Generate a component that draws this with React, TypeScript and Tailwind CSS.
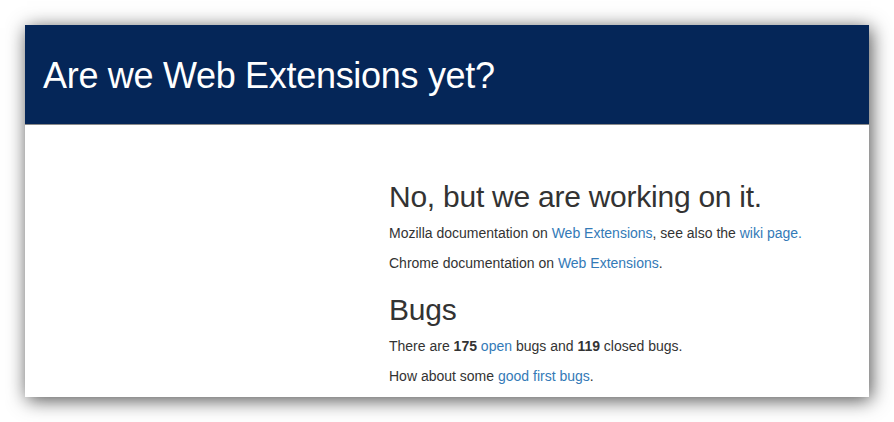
import React from 'react'

const Link = ({ children }: { children: React.ReactNode }) => (
    <a href="#" className="text-[#337ab7] no-underline">{children}</a>
)

export const App = () => {
    return (
        <div className="w-[894px] h-[422px] bg-white overflow-hidden pt-[25px] pl-[25px] font-['Liberation_Sans',Arial,sans-serif]">
            <div className="w-[844px] h-[372px] bg-white overflow-hidden shadow-[2px_3px_18px_rgba(0,0,0,0.7)]">
                <div className="h-[100px] bg-[#052658] border-b border-[#8a8a8a] pt-[31px] pl-[18px]">
                    <h1 className="text-white text-[36px] leading-[40px] font-normal tracking-[-0.3px]">Are we Web Extensions yet?</h1>
                </div>
                <div className="pl-[364px] pt-[55px] text-[#333] text-[14px] leading-[20px]">
                    <h2 className="text-[30px] leading-[33px] font-normal mb-[10px] tracking-[-0.25px]">No, but we are working on it.</h2>
                    <p className="mb-[10px]">Mozilla documentation on <Link>Web Extensions</Link>, see also the <Link>wiki page.</Link></p>
                    <p className="mb-[10px]">Chrome documentation on <Link>Web Extensions</Link>.</p>
                    <h2 className="text-[30px] leading-[33px] font-normal mt-[20px] mb-[10px] tracking-[-0.25px]">Bugs</h2>
                    <p className="mb-[10px]">There are <b>175</b> <Link>open</Link> bugs and <b>119</b> closed bugs.</p>
                    <p className="mb-[10px]">How about some <Link>good first bugs</Link>.</p>
                </div>
            </div>
        </div>
    )
}

export default App
